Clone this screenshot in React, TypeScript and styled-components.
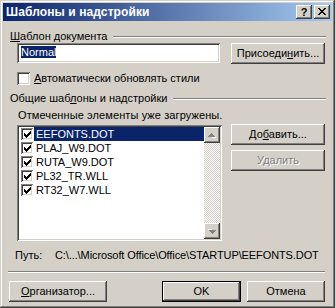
import styled, { createGlobalStyle } from "styled-components";

const GlobalStyle = createGlobalStyle`
  html, body {
    margin: 0;
    padding: 0;
    background: #d4d0c8;
  }
  body {
    font-family: "Liberation Sans", Arial, sans-serif;
    font-size: 11px;
    color: #000;
  }
  * { box-sizing: border-box; }
`;

const raised = `
  box-shadow: inset -1px -1px #404040, inset 1px 1px #fff,
    inset -2px -2px #808080, inset 2px 2px #d4d0c8;
`;

const sunken = `
  box-shadow: inset 1px 1px #808080, inset -1px -1px #fff,
    inset 2px 2px #404040, inset -2px -2px #d4d0c8;
`;

const Window = styled.div`
  width: 335px;
  height: 308px;
  padding: 3px;
  background: #d4d0c8;
  display: flex;
  flex-direction: column;
  box-shadow: inset -1px -1px #404040, inset 1px 1px #d4d0c8,
    inset -2px -2px #808080, inset 2px 2px #fff;
`;

const TitleBar = styled.div`
  height: 18px;
  display: flex;
  align-items: center;
  padding: 0 2px 0 3px;
  background: linear-gradient(to right, #0a246a, #a6caf0);
`;

const Title = styled.span`
  color: #fff;
  font-weight: bold;
  font-size: 12px;
  letter-spacing: 0.1px;
`;

const CaptionButtons = styled.div`
  margin-left: auto;
  display: flex;
  gap: 2px;
`;

const CaptionButton = styled.div`
  width: 16px;
  height: 14px;
  background: #d4d0c8;
  ${raised}
  display: flex;
  align-items: center;
  justify-content: center;
  font-weight: bold;
  font-size: 11px;
  line-height: 14px;
  padding-bottom: 1px;
`;

const Body = styled.div`
  flex: 1;
  padding: 0 7px 0 6px;
  display: flex;
  flex-direction: column;
`;

const GroupHeader = styled.div<{ $top: number }>`
  margin-top: ${(p) => p.$top}px;
  height: 13px;
  line-height: 13px;
  padding-left: 1px;
  display: flex;
  align-items: center;
  gap: 6px;
  white-space: nowrap;

  &::after {
    content: "";
    flex: 1;
    height: 0;
    margin-right: -1px;
    border-top: 1px solid #808080;
    border-bottom: 1px solid #fff;
  }
`;

const TemplateRow = styled.div`
  margin-left: 8px;
  display: flex;
  justify-content: space-between;
  align-items: flex-start;
`;

const TextField = styled.div`
  width: 203px;
  height: 20px;
  background: #fff;
  ${sunken}
  padding: 3px 4px;
  line-height: 13px;
`;

const Selected = styled.span`
  background: #0a246a;
  color: #fff;
`;

const Button = styled.div<{ $w: number; $default?: boolean; $disabled?: boolean }>`
  width: ${(p) => p.$w}px;
  height: 21px;
  background: #d4d0c8;
  display: flex;
  align-items: center;
  justify-content: center;
  line-height: 13px;
  white-space: nowrap;
  color: ${(p) => (p.$disabled ? "#808080" : "#000")};
  text-shadow: ${(p) => (p.$disabled ? "1px 1px 0 #fff" : "none")};
  ${(p) =>
    p.$default
      ? `box-shadow: inset 0 0 0 1px #000, inset -2px -2px #404040, inset 2px 2px #fff,
    inset -3px -3px #808080, inset 3px 3px #d4d0c8;`
      : raised}
`;

const CheckRow = styled.label`
  margin-top: 8px;
  margin-left: 8px;
  height: 13px;
  display: flex;
  align-items: center;
  gap: 4px;
  line-height: 13px;
`;

const CheckBox = styled.span`
  width: 13px;
  height: 13px;
  background: #fff;
  ${sunken}
`;

const Hint = styled.div`
  margin-top: 4px;
  margin-left: 9px;
  line-height: 13px;
  letter-spacing: 0.1px;
`;

const ListSection = styled.div`
  margin-top: 2px;
  margin-left: 8px;
  display: flex;
  justify-content: space-between;
  align-items: flex-start;
`;

const ListBox = styled.div`
  margin-top: 1px;
  width: 205px;
  height: 116px;
  padding: 2px;
  background: #fff;
  ${sunken}
  display: flex;
`;

const Items = styled.div`
  flex: 1;
  display: flex;
  flex-direction: column;
`;

const Item = styled.div`
  height: 14px;
  display: flex;
  align-items: center;
  padding-left: 2px;
`;

const ItemCheck = styled.span`
  width: 12px;
  height: 12px;
  flex: none;
  background: #fff;
  ${sunken}
  display: flex;
  align-items: center;
  justify-content: center;
`;

const ItemLabel = styled.span<{ $selected?: boolean }>`
  flex: 1;
  margin-left: 1px;
  padding-left: 2px;
  height: 14px;
  line-height: 14px;
  background: ${(p) => (p.$selected ? "#0a246a" : "transparent")};
  color: ${(p) => (p.$selected ? "#fff" : "#000")};
`;

const ScrollBar = styled.div`
  width: 16px;
  display: flex;
  flex-direction: column;
`;

const ScrollButton = styled.div`
  width: 16px;
  height: 16px;
  background: #d4d0c8;
  ${raised}
  display: flex;
  align-items: center;
  justify-content: center;
`;

const Track = styled.div`
  flex: 1;
  background-color: #fff;
  background-image: repeating-conic-gradient(#d4d0c8 0 25%, #fff 0 50%);
  background-size: 2px 2px;
`;

const SideButtons = styled.div`
  display: flex;
  flex-direction: column;
  gap: 5px;
`;

const PathRow = styled.div`
  margin-top: 8px;
  padding-left: 6px;
  display: flex;
  line-height: 13px;
  white-space: nowrap;
`;

const PathLabel = styled.span`
  width: 40px;
`;

const PathText = styled.span`
  letter-spacing: -0.1px;
`;

const Separator = styled.div`
  margin-top: 9px;
  margin-left: -1px;
  border-top: 1px solid #808080;
  border-bottom: 1px solid #fff;
`;

const Footer = styled.div`
  margin-top: 8px;
  display: flex;
  align-items: flex-start;
`;

const FooterRight = styled.div`
  margin-left: auto;
  display: flex;
  gap: 6px;
`;

const CheckMark = () => (
  <svg width="7" height="7" viewBox="0 0 7 7" shapeRendering="crispEdges">
    <path
      d="M6 0h1v3h-1v1h-1v1h-1v1h-1v1h-1v-1h-1v-1h-1v-3h1v1h1v1h1v-1h1v-1h1z"
      fill="#000"
    />
  </svg>
);

const Arrow = ({ up }: { up?: boolean }) => (
  <svg width="8" height="5" viewBox="0 0 8 5" shapeRendering="crispEdges">
    <g transform={up ? undefined : "rotate(180 4 2.5)"}>
      <path d="M4 1h1v1h1v1h1v1h1v1h-4z" fill="#fff" />
      <path d="M3 0h1v1h1v1h1v1h1v1h-7v-1h1v-1h1v-1h1z" fill="#808080" />
    </g>
  </svg>
);

const CloseGlyph = () => (
  <svg width="8" height="7" viewBox="0 0 8 7" shapeRendering="crispEdges">
    <path
      d="M0 0h2v1h1v1h2v-1h1v-1h2v1h-1v1h-1v1h-1v1h1v1h1v1h1v1h-2v-1h-1v-1h-2v1h-1v1h-2v-1h1v-1h1v-1h1v-1h-1v-1h-1v-1h-1z"
      fill="#000"
    />
  </svg>
);

const templates = ["EEFONTS.DOT", "PLAJ_W9.DOT", "RUTA_W9.DOT", "PL32_TR.WLL", "RT32_W7.WLL"];

const App = () => {
  return (
    <>
      <GlobalStyle />
      <Window>
        <TitleBar>
          <Title>Шаблоны и надстройки</Title>
          <CaptionButtons>
            <CaptionButton>?</CaptionButton>
            <CaptionButton>
              <CloseGlyph />
            </CaptionButton>
          </CaptionButtons>
        </TitleBar>
        <Body>
          <GroupHeader $top={9}>
            <span>
              <u>Ш</u>аблон документа
            </span>
          </GroupHeader>
          <TemplateRow>
            <TextField>
              <Selected>Normal</Selected>
            </TextField>
            <Button $w={94}>
              <span>
                Присоеди<u>н</u>ить...
              </span>
            </Button>
          </TemplateRow>
          <CheckRow>
            <CheckBox />
            <span>
              <u>А</u>втоматически обновлять стили
            </span>
          </CheckRow>
          <GroupHeader $top={7}>
            <span>
              Общие шаб<u>л</u>оны и надстройки
            </span>
          </GroupHeader>
          <Hint>Отмеченные элементы уже загружены.</Hint>
          <ListSection>
            <ListBox>
              <Items>
                {templates.map((name, i) => (
                  <Item key={name}>
                    <ItemCheck>
                      <CheckMark />
                    </ItemCheck>
                    <ItemLabel $selected={i === 0}>{name}</ItemLabel>
                  </Item>
                ))}
              </Items>
              <ScrollBar>
                <ScrollButton>
                  <Arrow up />
                </ScrollButton>
                <Track />
                <ScrollButton>
                  <Arrow />
                </ScrollButton>
              </ScrollBar>
            </ListBox>
            <SideButtons>
              <Button $w={94}>
                <span>
                  До<u>б</u>авить...
                </span>
              </Button>
              <Button $w={94} $disabled>
                Удалить
              </Button>
            </SideButtons>
          </ListSection>
          <PathRow>
            <PathLabel>Путь:</PathLabel>
            <PathText>C:\...\Microsoft Office\Office\STARTUP\EEFONTS.DOT</PathText>
          </PathRow>
          <Separator />
          <Footer>
            <Button $w={98}>
              <span>
                <u>О</u>рганизатор...
              </span>
            </Button>
            <FooterRight>
              <Button $w={79} $default>
                OK
              </Button>
              <Button $w={78}>Отмена</Button>
            </FooterRight>
          </Footer>
        </Body>
      </Window>
    </>
  );
};

export default App;
